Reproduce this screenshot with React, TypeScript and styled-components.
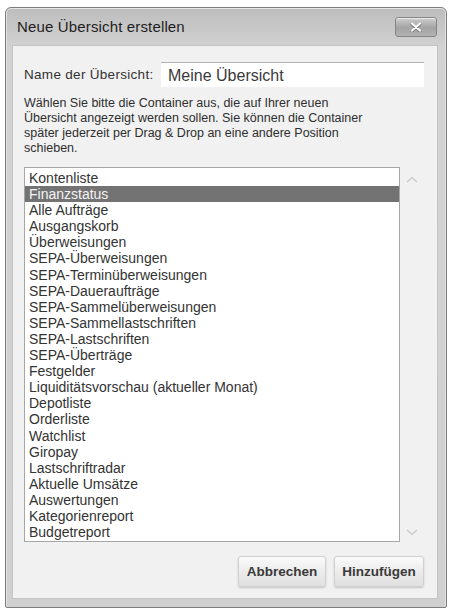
import React from 'react';
import styled, { createGlobalStyle } from 'styled-components';

const GlobalStyle = createGlobalStyle`
  html, body { margin: 0; padding: 0; background: #ffffff; }
  body { font-family: "Liberation Sans", Arial, sans-serif; color: #2b2b2b; }
`;

const Page = styled.div`
  padding: 7px 2px 4px 5px;
`;

const Window = styled.div`
  width: 442px;
  height: 601px;
  box-sizing: border-box;
  border: 1px solid #7c7c7c;
  border-radius: 6px 6px 2px 2px;
  background: linear-gradient(#bdbdbd 0px, #d2d2d2 40px, #d0d0d0 100%);
  display: flex;
  flex-direction: column;
  box-shadow: inset 0 1px 0 #e6e6e6, inset 1px 0 0 #e2e2e2, inset -1px 0 0 #e2e2e2;
`;

const TitleBar = styled.div`
  height: 37px;
  display: flex;
  align-items: center;
  justify-content: space-between;
  padding: 0 9px 0 11px;
  flex-shrink: 0;
`;

const Title = styled.div`
  font-size: 15px;
  color: #1e1e1e;
  letter-spacing: 0.15px;
`;

const CloseButton = styled.button`
  width: 42px;
  height: 20px;
  border: 1px solid #858585;
  border-radius: 3px;
  background: linear-gradient(#cfcfcf, #a3a3a3 55%, #b3b3b3);
  display: flex;
  align-items: center;
  justify-content: center;
  padding: 0;
  box-shadow: inset 0 1px 0 rgba(255, 255, 255, 0.6);
`;

const Panel = styled.div`
  flex: 1;
  margin: 0 8px 8px 6px;
  background: #f1f1f1;
  border: 1px solid #c4c4c4;
  padding: 16px 13px 10px 11px;
  display: flex;
  flex-direction: column;
`;

const NameRow = styled.div`
  display: flex;
  align-items: center;
  justify-content: space-between;
`;

const Label = styled.label`
  font-size: 13.5px;
  color: #333;
  letter-spacing: 0.3px;
`;

const NameInput = styled.div`
  width: 263px;
  height: 25px;
  box-sizing: border-box;
  background: #ffffff;
  border-top: 1px solid #b4b4b4;
  padding: 2px 7px 0;
  font-size: 16px;
  color: #3a3a3a;
  display: flex;
  align-items: center;
`;

const Hint = styled.p`
  margin: 9px 0 0;
  font-size: 12.5px;
  line-height: 15px;
  color: #2e2e2e;
`;

const ListRow = styled.div`
  display: flex;
  margin-top: 11px;
`;

const List = styled.ul`
  list-style: none;
  margin: 0;
  padding: 2px 0 3px;
  width: 376px;
  height: 375px;
  box-sizing: border-box;
  background: #ffffff;
  border: 1px solid #a6a6a6;
  overflow: hidden;
`;

const Item = styled.li<{ $selected?: boolean }>`
  height: 16.1px;
  line-height: 16px;
  padding-left: 4px;
  font-size: 14px;
  color: ${p => (p.$selected ? '#f4f4f4' : '#333333')};
  background: ${p => (p.$selected ? '#737373' : 'transparent')};
  white-space: nowrap;
`;

const ScrollCol = styled.div`
  width: 23px;
  display: flex;
  flex-direction: column;
  justify-content: space-between;
  align-items: center;
  padding: 9px 0 6px;
  box-sizing: border-box;
`;

const Buttons = styled.div`
  display: flex;
  justify-content: flex-end;
  gap: 8px;
  margin-top: 14px;
`;

const Button = styled.button<{ $w: number }>`
  width: ${p => p.$w}px;
  height: 31px;
  border: 1px solid #d0d0d0;
  border-radius: 3px;
  background: linear-gradient(#fafafa, #ececec 50%, #e0e0e0);
  font-family: "Liberation Sans", Arial, sans-serif;
  font-size: 13.5px;
  font-weight: bold;
  color: #3a3a3a;
  padding: 0;
  box-shadow: 0 1px 2px rgba(0, 0, 0, 0.18);
`;

const Chevron = ({ up }: { up?: boolean }) => (
  <svg width="12" height="7" viewBox="0 0 12 7">
    <path
      d={up ? 'M1 6 L6 1.5 L11 6' : 'M1 1 L6 5.5 L11 1'}
      fill="none"
      stroke="#c9c9c9"
      strokeWidth="1.3"
    />
  </svg>
);

const items = [
  'Kontenliste',
  'Finanzstatus',
  'Alle Aufträge',
  'Ausgangskorb',
  'Überweisungen',
  'SEPA-Überweisungen',
  'SEPA-Terminüberweisungen',
  'SEPA-Daueraufträge',
  'SEPA-Sammelüberweisungen',
  'SEPA-Sammellastschriften',
  'SEPA-Lastschriften',
  'SEPA-Überträge',
  'Festgelder',
  'Liquiditätsvorschau (aktueller Monat)',
  'Depotliste',
  'Orderliste',
  'Watchlist',
  'Giropay',
  'Lastschriftradar',
  'Aktuelle Umsätze',
  'Auswertungen',
  'Kategorienreport',
  'Budgetreport',
];

export default function App() {
  return (
    <>
      <GlobalStyle />
      <Page>
        <Window>
          <TitleBar>
            <Title>Neue Übersicht erstellen</Title>
            <CloseButton aria-label="Schließen">
              <svg width="12" height="10" viewBox="0 0 12 10">
                <path d="M2 1.5 L10 8.5 M10 1.5 L2 8.5" stroke="#7a7a7a" strokeWidth="3" strokeLinecap="round" transform="translate(0 0.6)" />
                <path d="M2 1.5 L10 8.5 M10 1.5 L2 8.5" stroke="#ffffff" strokeWidth="2.2" strokeLinecap="round" />
              </svg>
            </CloseButton>
          </TitleBar>
          <Panel>
            <NameRow>
              <Label>Name der Übersicht:</Label>
              <NameInput>Meine Übersicht</NameInput>
            </NameRow>
            <Hint>
              Wählen Sie bitte die Container aus, die auf Ihrer neuen
              <br />
              Übersicht angezeigt werden sollen. Sie können die Container
              <br />
              später jederzeit per Drag &amp; Drop an eine andere Position
              <br />
              schieben.
            </Hint>
            <ListRow>
              <List>
                {items.map((name, i) => (
                  <Item key={name} $selected={i === 1}>
                    {name}
                  </Item>
                ))}
              </List>
              <ScrollCol>
                <Chevron up />
                <Chevron />
              </ScrollCol>
            </ListRow>
            <Buttons>
              <Button $w={88}>Abbrechen</Button>
              <Button $w={90}>Hinzufügen</Button>
            </Buttons>
          </Panel>
        </Window>
      </Page>
    </>
  );
}
